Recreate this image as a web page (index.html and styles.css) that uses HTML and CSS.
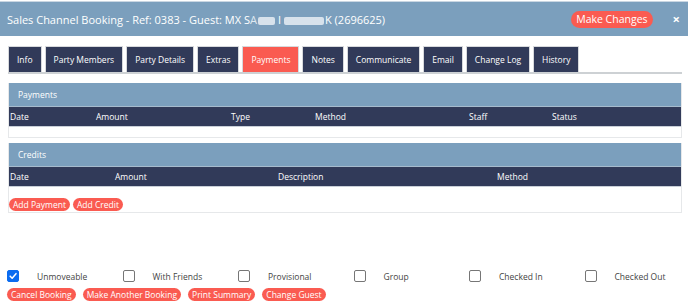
FILE: index.html
```html
<html lang="en"><head>
    <meta charset="UTF-8">
    <title>Sales Channel Booking</title>
    <link rel="stylesheet" href="styles.css">
</head>
<body>
    <header class="modal-header">
        <h1 class="modal-title">Sales Channel Booking - Ref: 0383 - Guest: MX S<span class="blur">A</span><span class="redact r1"></span>I<span class="redact r2"></span>K (2696625)</h1>
        <button class="pill pill-lg">Make Changes</button>
        <span class="close">&times;</span>
    </header>

    <nav class="tabs">
        <a class="tab">Info</a>
        <a class="tab">Party Members</a>
        <a class="tab">Party Details</a>
        <a class="tab">Extras</a>
        <a class="tab active">Payments</a>
        <a class="tab">Notes</a>
        <a class="tab">Communicate</a>
        <a class="tab">Email</a>
        <a class="tab">Change Log</a>
        <a class="tab">History</a>
    </nav>

    <section class="panel">
        <div class="panel-heading">Payments</div>
        <div class="grid-head pay-cols">
            <span>Date</span><span>Amount</span><span>Type</span><span>Method</span><span>Staff</span><span>Status</span>
        </div>
        <div class="empty-row"></div>
    </section>

    <section class="panel panel-next">
        <div class="panel-heading">Credits</div>
        <div class="grid-head credit-cols">
            <span>Date</span><span>Amount</span><span>Description</span><span>Method</span>
        </div>
        <div class="panel-actions">
            <button class="pill">Add Payment</button>
            <button class="pill">Add Credit</button>
        </div>
    </section>

    <div class="flags">
        <label class="flag"><span class="box checked"><svg viewBox="0 0 12 12" width="12" height="12"><path d="M2.6 6.2 L5 8.6 L9.6 3.2" fill="none" stroke="#fff" stroke-width="1.8" stroke-linecap="round" stroke-linejoin="round"/></svg></span>Unmoveable</label>
        <label class="flag"><span class="box"></span>With Friends</label>
        <label class="flag"><span class="box"></span>Provisional</label>
        <label class="flag"><span class="box"></span>Group</label>
        <label class="flag"><span class="box"></span>Checked In</label>
        <label class="flag"><span class="box"></span>Checked Out</label>
    </div>

    <div class="footer-actions">
        <button class="pill">Cancel Booking</button>
        <button class="pill">Make Another Booking</button>
        <button class="pill">Print Summary</button>
        <button class="pill">Change Guest</button>
    </div>
</body></html>
```

FILE: styles.css
```css
body {
    margin: 0;
    font-family: 'Open Sans', 'DejaVu Sans', sans-serif;
    background-color: #fff;
    color: #333;
    width: 688px;
}
.modal-header {
    display: flex;
    align-items: center;
    height: 34px;
    margin-top: 1px;
    padding: 0 7px;
    background-color: #7b9fbd;
    border-top: 1px solid #c9d6e2;
}
.modal-title {
    margin: 0;
    flex: 1;
    font-size: 11px;
    font-weight: 400;
    color: #fff;
}
.blur {
    color: #dfe8f0;
}
.redact {
    display: inline-block;
    height: 8px;
    background-color: #d7e2ec;
    vertical-align: -1px;
    border-radius: 2px;
}
.r1 { width: 17px; margin: 0 3px 0 1px; }
.r2 { width: 40px; margin: 0 1px 0 3px; }
.pill {
    font-family: inherit;
    background-color: #fa5b51;
    color: #fff;
    border: none;
    border-radius: 7px;
    font-size: 8.5px;
    height: 13px;
    padding: 0 4px;
    line-height: 13px;
    cursor: pointer;
}
.pill-lg {
    font-size: 10.5px;
    height: 17px;
    line-height: 17px;
    border-radius: 9px;
    padding: 0 5px;
    margin-right: 20px;
}
.close {
    color: #fff;
    font-size: 13px;
    font-weight: 700;
    margin-right: 1px;
}
.tabs {
    display: flex;
    gap: 3px;
    margin: 11px 6px 0 8px;
    border-bottom: 2px solid #cdd1d4;
}
.tab {
    height: 25px;
    line-height: 25px;
    padding: 0 8px;
    font-size: 8.5px;
    color: #fff;
    background-color: #313a59;
    border: 1px solid #d7d9dc;
    border-bottom: none;
    margin-top: -1px;
}
.tab.active {
    background-color: #fa5b51;
}
.panel {
    margin: 9px 6px 0 8px;
    border: 1px solid #e6e8ea;
    border-top: none;
}
.panel-next {
    margin-top: 5px;
}
.panel-heading {
    height: 23px;
    line-height: 23px;
    padding: 0 9px;
    background-color: #7b9fbd;
    border-bottom: 1px solid #a6bbcd;
    color: #fff;
    font-size: 8.5px;
}
.grid-head {
    display: grid;
    height: 19px;
    line-height: 19px;
    padding-left: 1px;
    background-color: #313a59;
    border-bottom: 1px solid #c8cfd8;
    color: #fff;
    font-size: 8.5px;
}
.pay-cols {
    grid-template-columns: 86px 135px 84px 154px 83px 1fr;
}
.credit-cols {
    grid-template-columns: 105px 163px 219px 1fr;
}
.empty-row {
    height: 10px;
}
.panel-actions {
    display: flex;
    gap: 3px;
    padding: 11px 0 1px 0;
}
.flags {
    display: grid;
    grid-template-columns: repeat(6, 115.5px);
    margin: 57px 0 0 7px;
}
.flag {
    display: flex;
    align-items: center;
    gap: 18px;
    font-size: 8.5px;
    color: #444;
}
.box {
    width: 10px;
    height: 10px;
    border: 1px solid #767676;
    border-radius: 2px;
    background-color: #fff;
    display: flex;
    align-items: center;
    justify-content: center;
}
.box.checked {
    background-color: #0b6cf0;
    border-color: #0b6cf0;
}
.footer-actions {
    display: flex;
    gap: 7px;
    margin: 6px 0 0 7px;
}
```
